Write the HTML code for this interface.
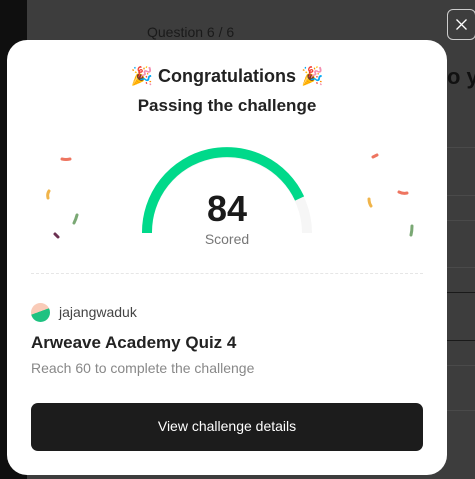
<!DOCTYPE html>
<html><head><style>
body{margin:0;width:475px;height:479px;overflow:hidden;background:#3d3d3d;font-family:"Liberation Sans",sans-serif;position:relative}
.l{position:absolute;left:0;top:0;width:27px;height:479px;background:#0f0f0f}
.q{position:absolute;left:147px;top:24px;font-size:14px;color:#1a1a1a}
.x{position:absolute;left:447px;top:9px;width:27px;height:29px;border:1px solid #ccc;border-radius:6px}
.modal{position:absolute;left:7px;top:40px;width:440px;height:435px;background:#fff;border-radius:20px}
.t{position:absolute;width:440px;text-align:center;font-weight:bold;color:#222;font-size:18px}
.r{position:absolute;right:0;width:28px;height:1px;background:#1a1a1a}
.f{position:absolute;right:0;width:28px;height:1px;background:#4a4a4a}
</style></head><body>
<div class="l"></div>
<div class="q">Question 6 / 6</div>
<div class="x"><svg width="27" height="29"><path d="M8.5 9.5 L18.5 19.5 M18.5 9.5 L8.5 19.5" stroke="#fff" stroke-width="1.3"/></svg></div>
<div style="position:absolute;left:447px;top:64px;font-size:22px;font-weight:bold;color:#111;white-space:nowrap">o y</div>
<div class="f" style="top:147px"></div><div class="f" style="top:195px"></div><div class="f" style="top:220px"></div><div class="f" style="top:267px"></div>
<div class="r" style="top:292px"></div><div class="r" style="top:340px"></div>
<div class="f" style="top:365px"></div><div class="f" style="top:410px"></div>
<div class="modal">
<div class="t" style="top:26px">🎉 Congratulations 🎉</div>
<div class="t" style="top:56px;font-size:17px">Passing the challenge</div>
<svg style="position:absolute;left:0;top:0" width="440" height="240">
<path d="M140 193 A80 80 0 0 1 300 193" fill="none" stroke="#f6f6f6" stroke-width="10"/>
<path d="M140 193 A80 80 0 0 1 292.6 158.5" fill="none" stroke="#00d98a" stroke-width="10"/>
<g stroke-width="3" fill="none" stroke-linecap="round">
<path d="M55 119 q4 1 8 0" stroke="#ee7560"/>
<path d="M42 151 q-2 3 -1 7" stroke="#f0b44a"/>
<path d="M70 175 q-1 4 -3 8" stroke="#7aa874"/>
<path d="M48 194 l3 3" stroke="#6b3050"/>
<path d="M366 117 l4 -2" stroke="#ee7560"/>
<path d="M392 152 q4 2 8 1" stroke="#ee7560"/>
<path d="M362 159 q0 4 2 7" stroke="#f0b44a"/>
<path d="M405 186 q0 5 -1 9" stroke="#7aa874"/>
</g>
</svg>
<div style="position:absolute;left:170px;width:100px;top:148px;text-align:center;font-size:36px;font-weight:bold;color:#1a1a1a">84</div>
<div style="position:absolute;left:170px;width:100px;top:191px;text-align:center;font-size:14px;color:#777">Scored</div>
<div style="position:absolute;left:24px;top:233px;width:392px;border-top:1px dashed #e6e6e6"></div>
<div style="position:absolute;left:24px;top:263px;width:19px;height:19px;border-radius:50%;background:linear-gradient(160deg,#f9cbb8 45%,#1ec281 46%)"></div>
<div style="position:absolute;left:52px;top:264px;font-size:14px;color:#444">jajangwaduk</div>
<div style="position:absolute;left:24px;top:293px;font-size:17px;font-weight:bold;color:#222">Arweave Academy Quiz 4</div>
<div style="position:absolute;left:24px;top:320px;font-size:14px;color:#888">Reach 60 to complete the challenge</div>
<div style="position:absolute;left:24px;top:363px;width:392px;height:48px;background:#1c1c1c;border-radius:7px;color:#fff;font-size:14px;text-align:center;line-height:47px">View challenge details</div>
</div>
</body></html>
